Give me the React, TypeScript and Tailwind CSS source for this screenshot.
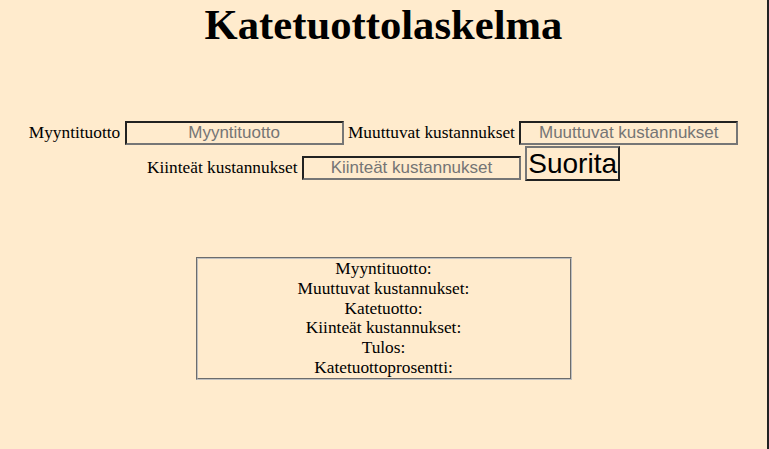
import React from "react";

const inputClass =
	"w-[219px] h-[24px] border-2 [border-style:inset] border-[#767676] bg-transparent text-center align-baseline font-['Liberation_Sans',Arial,sans-serif] text-[17px] leading-normal px-[1px] py-[1px] placeholder:text-[#757575]";

export default function App() {
	return (
		<div className="min-h-screen w-full bg-[#ffebcd] border-r-2 border-[#222] font-['Liberation_Serif','Times_New_Roman',serif] text-[17.33px] leading-normal text-black">
			<h1 className="m-0 text-center font-bold text-[42.67px] leading-[49px]">Katetuottolaskelma</h1>

			<div className="mt-[71px] text-center">
				<span>Myyntituotto</span>{" "}
				<input type="text" placeholder="Myyntituotto" className={inputClass} />{" "}
				<span>Muuttuvat kustannukset</span>{" "}
				<input type="text" placeholder="Muuttuvat kustannukset" className={inputClass} />
			</div>
			<div className="text-center">
				<span>Kiinteät kustannukset</span>{" "}
				<input type="text" placeholder="Kiinteät kustannukset" className={inputClass} />{" "}
				<button className="border-2 [border-style:outset] border-[#767676] bg-transparent px-[1px] py-0 align-baseline font-['Liberation_Sans',Arial,sans-serif] text-[28px] leading-[31px]">
					Suorita
				</button>
			</div>

			<div className="flex justify-center mt-[76px]">
				<div className="w-[376px] border-2 [border-style:groove] border-[#c0c0c0] text-center leading-[19.8px]">
					<div>Myyntituotto:</div>
					<div>Muuttuvat kustannukset:</div>
					<div>Katetuotto:</div>
					<div>Kiinteät kustannukset:</div>
					<div>Tulos:</div>
					<div>Katetuottoprosentti:</div>
				</div>
			</div>
		</div>
	);
}
